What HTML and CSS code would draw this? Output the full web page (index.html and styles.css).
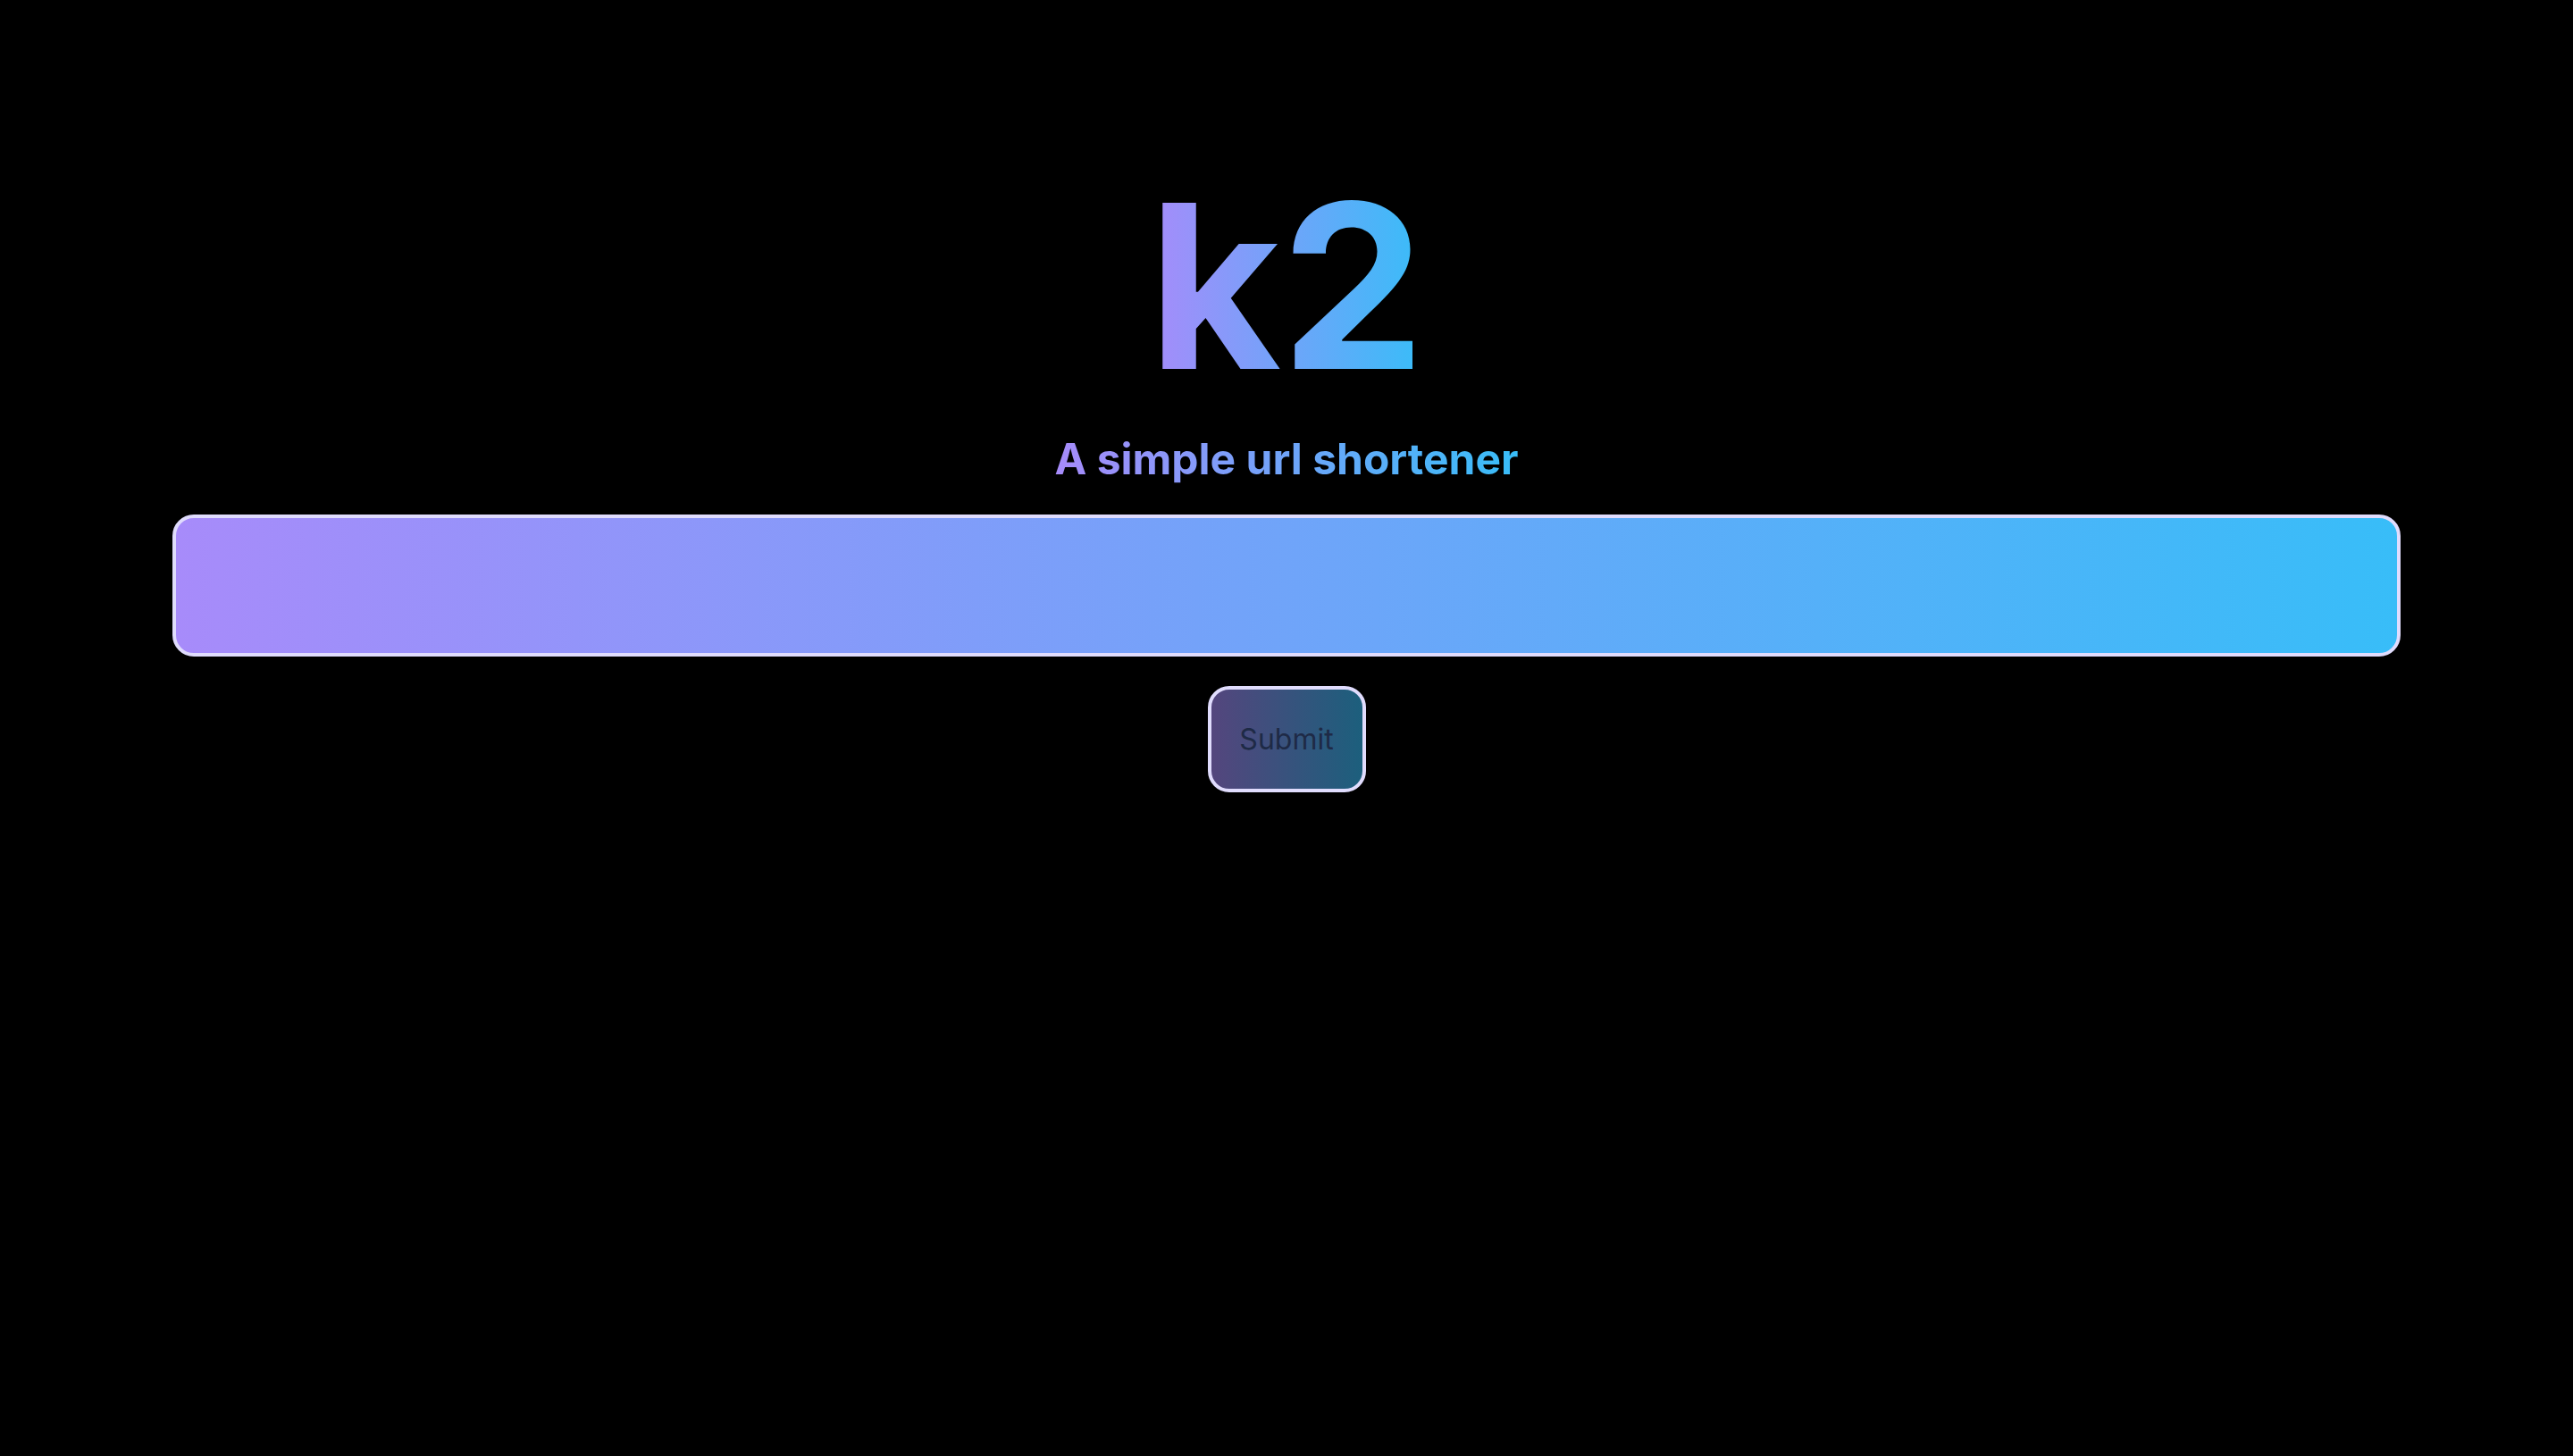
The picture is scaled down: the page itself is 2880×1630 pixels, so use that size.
FILE: index.html
```html
<!DOCTYPE html>
<html lang="en">
<head>
<meta charset="utf-8">
<title>k2</title>
<link rel="stylesheet" href="styles.css">
</head>
<body>
<main class="page">
  <h1 class="title">k2</h1>
  <p class="subtitle">A simple url shortener</p>
  <form class="form" onsubmit="return false">
    <input class="url-input" type="text" aria-label="URL">
    <button class="submit" type="submit">Submit</button>
  </form>
</main>
</body>
</html>
```
FILE: styles.css
```css
html, body {
  margin: 0;
  padding: 0;
  background: #000;
}
body {
  font-family: Inter, "Noto Sans", sans-serif;
  min-height: 1630px;
}
.page {
  display: flex;
  flex-direction: column;
  align-items: center;
  padding-top: 192px;
}
.title {
  margin: 0;
  font-size: 256px;
  line-height: 1;
  font-weight: 700;
  letter-spacing: 0;
  background: linear-gradient(to right, #a78bfa, #38bdf8);
  -webkit-background-clip: text;
  background-clip: text;
  color: transparent;
}
.subtitle {
  margin: 34px 0 0;
  font-size: 48px;
  line-height: 64px;
  font-weight: 700;
  background: linear-gradient(to right, #a78bfa, #38bdf8);
  -webkit-background-clip: text;
  background-clip: text;
  color: transparent;
}
.form {
  display: flex;
  flex-direction: column;
  align-items: center;
  gap: 33px;
  margin-top: 30px;
  width: 2494px;
}
.url-input {
  box-sizing: border-box;
  width: 100%;
  height: 159px;
  border: 4px solid #e0dcfd;
  border-radius: 24px;
  background: linear-gradient(to right, #a78bfa, #38bdf8);
  outline: none;
  padding: 0 32px;
  font-family: inherit;
  font-size: 32px;
}
.submit {
  box-sizing: border-box;
  width: 177px;
  height: 119px;
  border: 4px solid #e0dcfd;
  border-radius: 24px;
  background: linear-gradient(to right, rgba(167,139,250,0.5), rgba(56,189,248,0.5));
  color: #1e2a46;
  font-family: inherit;
  font-size: 32px;
  font-weight: 400;
  padding: 0;
}
```
